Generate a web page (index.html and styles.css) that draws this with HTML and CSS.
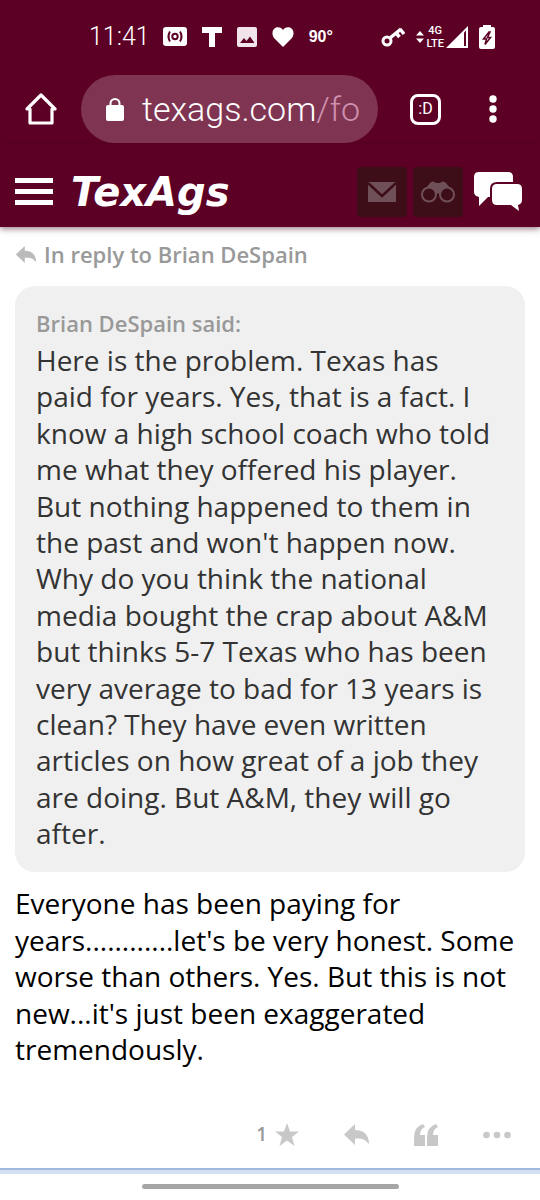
FILE: index.html
```
<!DOCTYPE html>
<html lang="en">
<head>
    <meta charset="UTF-8">
    <meta name="viewport" content="width=device-width, initial-scale=1.0">
    <title>TexAgs</title>
    <link rel="stylesheet" href="styles.css">
</head>
<body>
    <div class="status-bar">
        <span class="clock">11:41</span>
        <div class="notifications">
            <svg width="24" height="20" viewBox="0 0 24 20">
                <rect width="24" height="19" rx="3" fill="#fff"/>
                <g fill="none" stroke="#5c0025" stroke-width="2">
                    <circle cx="12" cy="9.500" r="2.700"/>
                    <path d="M7 4.500Q4 9.500 7 14.500M17 4.500Q20 9.500 17 14.500"/>
                </g>
            </svg>
            <svg width="20" height="20" viewBox="0 0 20 20" fill="#fff"><path d="M0 0H20V6H13V20H7V6H0Z"/></svg>
            <svg width="20" height="20" viewBox="0 0 20 20">
                <rect width="20" height="20" rx="2" fill="#f1e4ea"/>
                <path d="M3 16L7 11L9.500 14L13 9.500L17.500 16Z" fill="#5c0025"/>
            </svg>
            <svg width="22" height="20" viewBox="0 0 22 20" fill="#fff"><path d="M11 20L3 12C-1 8 0 2 4 .500C7-.500 10 1 11 3C12 1 15-.500 18 .500C22 2 23 8 19 12Z"/></svg>
            <span class="temp">90°</span>
        </div>
        <div class="signals">
            <svg width="24" height="22" viewBox="0 0 24 22">
                <circle cx="6" cy="15" r="4" fill="none" stroke="#fff" stroke-width="3"/>
                <path d="M9 12L20 3M15 7L18.500 11M19 3L23 8" fill="none" stroke="#fff" stroke-width="3.500"/>
            </svg>
            <div class="network">
                <svg width="8" height="12" viewBox="0 0 8 12" fill="#fff"><path d="M4 0L8 4.500H0ZM4 12L0 7.500H8Z"/></svg>
                <div class="lte">
                    <div>4G</div>
                    <div>LTE</div>
                </div>
                <svg width="22" height="22" viewBox="0 0 22 22"><path d="M0 22L22 0V22Z" fill="#fff"/><path d="M18 6.500V20H20V4.500Z" fill="#5c0025"/></svg>
            </div>
            <svg width="16" height="24" viewBox="0 0 16 24">
                <path d="M4 0H12V2H14Q16 2 16 4V22Q16 24 14 24H2Q0 24 0 22V4Q0 2 2 2H4Z" fill="#fff"/>
                <path d="M10 7L4.500 14H7.500L6 19.500L11.500 12.500H8.500L11 7Z" fill="none" stroke="#5c0025" stroke-width="1.500"/>
            </svg>
        </div>
    </div>

    <div class="browser-bar">
        <button class="icon-button" aria-label="Home">
            <svg width="32" height="32" viewBox="0 0 32 32" fill="none" stroke="#fff" stroke-width="3.200" stroke-linejoin="round"><path d="M2 16L16 2L30 16H27V30H5V16Z"/></svg>
        </button>
        <button class="address">
            <svg width="18" height="23" viewBox="0 0 18 23"><path d="M4.500 9V5.500A4.500 4.500 0 0 1 13.500 5.500V9" fill="none" stroke="#fff" stroke-width="2"/><rect y="7" width="18" height="16" rx="2" fill="#fff"/></svg>
            <span class="url">texags.com<span class="path">/fo</span></span>
        </button>
        <button class="tabs" aria-label="Tabs">:D</button>
        <button class="icon-button" aria-label="More">
            <svg width="8" height="28" viewBox="0 0 8 28" fill="#fff"><circle cx="4" cy="4" r="3.700"/><circle cx="4" cy="14" r="3.700"/><circle cx="4" cy="24" r="3.700"/></svg>
        </button>
    </div>

    <header class="site-header">
        <button class="icon-button" aria-label="Menu">
            <svg width="38" height="28" viewBox="0 0 38 28" fill="#fff"><path d="M0 0H38V5H0ZM0 11H38V16H0ZM0 22H38V27H0Z"/></svg>
        </button>
        <a class="logo" href="#">TexAgs</a>
        <button class="tile" aria-label="Messages">
            <svg width="28" height="20" viewBox="0 0 28 20"><path d="M0 0H28V20H0Z" fill="#705058"/><path d="M0 1L14 14L28 1" fill="none" stroke="#3d0d18" stroke-width="2.500"/></svg>
        </button>
        <button class="tile" aria-label="Watched topics">
            <svg width="34" height="22" viewBox="0 0 34 22">
                <path d="M1 12L9 2Q12-1 15 2H19Q22-1 25 2L33 12L25 18L17 12L9 18Z" fill="#705058"/>
                <g fill="#3d0d18" stroke="#705058" stroke-width="2"><circle cx="8" cy="13.500" r="7"/><circle cx="26" cy="13.500" r="7"/></g>
            </svg>
        </button>
        <button class="icon-button" aria-label="Forums">
            <svg width="48" height="39" viewBox="0 0 48 39" fill="#fff">
                <path d="M5 0H34Q39 0 39 5V10H23Q16 10 16 17V25H14L5 34V25Q0 24 0 20V5Q0 0 5 0Z"/>
                <path d="M23 12H43Q48 12 48 17V28Q48 32 44 33L45 39L37 33H23Q18 33 18 28V17Q18 12 23 12Z"/>
            </svg>
        </button>
    </header>

    <main class="post">
        <a class="reply-to" href="#">
            <svg width="22" height="17" viewBox="0 0 25 21" fill="#bbb"><path d="M0 10.500L11 0V6C20 6 25 11 25 20C21 15 18 14 11 14.500V21Z"/></svg>
            In reply to Brian DeSpain
        </a>
        <blockquote class="quote">
            <cite class="quote-author">Brian DeSpain said:</cite>
            <p>Here is the problem. Texas has paid for years. Yes, that is a fact. I know a high school coach who told me what they offered his player. But nothing happened to them in the past and won't happen now. Why do you think the national media bought the crap about A&amp;M but thinks 5-7 Texas who has been very average to bad for 13 years is clean? They have even written articles on how great of a job they are doing. But A&amp;M, they will go after.</p>
        </blockquote>
        <p class="message">Everyone has been paying for years............let's be very honest. Some worse than others. Yes. But this is not new...it's just been exaggerated tremendously.</p>
        <div class="actions">
            <button class="star" aria-label="1 star">
                1
                <svg width="24" height="23" viewBox="0 0 24 23" fill="#c8c8c8"><path d="M12 0L15 8.500H24L17 14L19.500 23L12 17.500L4.500 23L7 14L0 8.500H9Z"/></svg>
            </button>
            <button aria-label="Reply">
                <svg width="25" height="21" viewBox="0 0 25 21" fill="#c8c8c8"><path d="M0 10.500L11 0V6C20 6 25 11 25 20C21 15 18 14 11 14.500V21Z"/></svg>
            </button>
            <button aria-label="Quote">
                <svg width="24" height="22" viewBox="0 0 24 22" fill="#c8c8c8"><path d="M9 0L11 3Q6 5 6 11H11V22H0V13Q0 3 9 0ZM22 0L24 3Q19 5 19 11H24V22H13V13Q13 3 22 0Z"/></svg>
            </button>
            <button aria-label="More options">
                <svg width="28" height="8" viewBox="0 0 28 8" fill="#c8c8c8"><circle cx="3.500" cy="4" r="3.300"/><circle cx="14" cy="4" r="3.300"/><circle cx="24.500" cy="4" r="3.300"/></svg>
            </button>
        </div>
    </main>
    <div class="divider"></div>
    <div class="nav-handle"></div>
</body>
</html>
```
FILE: styles.css
```
* {
    box-sizing: border-box;
}
body {
    margin: 0;
    background: #fff;
    font-family: "Open Sans", sans-serif;
    font-size: 28px;
    line-height: 1.3;
    color: #111;
}
svg {
    display: block;
    flex-shrink: 0;
}
button {
    border: 0;
    padding: 0;
    background: none;
    font: inherit;
    color: inherit;
    cursor: pointer;
}
p {
    margin: 0;
}
.status-bar, .browser-bar, .site-header {
    display: flex;
    align-items: center;
    background: #5c0025;
    color: #fff;
}
.status-bar {
    height: 74px;
    padding: 0 45px 0 89px;
    font-family: Roboto, sans-serif;
}
.clock {
    font-size: 25px;
    font-weight: 300;
}
.notifications {
    display: flex;
    align-items: center;
    gap: 15px;
    margin-left: 13px;
}
.temp {
    font-family: "Liberation Sans", sans-serif;
    font-size: 16px;
    font-weight: bold;
}
.signals {
    display: flex;
    align-items: center;
    gap: 11px;
    margin-left: auto;
}
.network {
    display: flex;
    align-items: center;
    gap: 2px;
}
.lte {
    font-size: 11px;
    font-weight: 500;
    line-height: 13px;
    text-align: center;
}
.browser-bar {
    height: 70px;
    padding: 0 43px 0 25px;
}
.address {
    display: flex;
    align-items: center;
    flex: 1;
    gap: 18px;
    height: 68px;
    margin: 0 32px 0 24px;
    padding-left: 25px;
    border-radius: 34px;
    background: #7f3552;
    font-family: Roboto, sans-serif;
    font-size: 34px;
    font-weight: 300;
}
.path {
    color: #cf8fae;
}
.tabs {
    width: 31px;
    height: 31px;
    margin-right: 48px;
    border: 3px solid #fff;
    border-radius: 8px;
    font-family: Roboto, sans-serif;
    font-size: 16px;
    line-height: 24px;
}
.site-header {
    height: 83px;
    padding: 12px 18px 0 15px;
    box-shadow: 0 2px 6px rgba(60, 0, 30, 0.5);
}
.logo {
    margin: 0 auto 0 18px;
    font-family: "DejaVu Sans", sans-serif;
    font-size: 40px;
    font-style: italic;
    font-weight: bold;
    line-height: 40px;
    color: #fff;
    text-decoration: none;
}
.tile {
    display: flex;
    align-items: center;
    justify-content: center;
    width: 50px;
    height: 50px;
    margin-right: 6px;
    border-radius: 4px;
    background: #3d0d18;
}
.tile + .icon-button {
    margin-left: 5px;
}
.post {
    padding: 12px 15px 21px;
}
.reply-to {
    display: flex;
    align-items: center;
    gap: 7px;
    font-size: 22px;
    font-weight: 600;
    line-height: 30px;
    color: #999;
    text-decoration: none;
}
.quote {
    margin: 17px 0 13px;
    padding: 21px 27px 21px 21px;
    border-radius: 20px;
    background: #f0f0f0;
    color: #333;
}
.quote-author {
    display: block;
    margin-bottom: 3px;
    font-size: 22px;
    font-style: normal;
    font-weight: 600;
    line-height: 32px;
    color: #999;
}
.message {
    color: #000;
}
.actions {
    display: flex;
    align-items: center;
    justify-content: flex-end;
    gap: 45px;
    margin-top: 55px;
    padding-right: 14px;
}
.star {
    display: flex;
    align-items: center;
    gap: 8px;
    font-size: 19px;
    font-weight: 600;
    color: #999;
}
.divider {
    height: 6px;
    border-top: 2px solid #a3b8de;
    background: #d3dff2;
}
.nav-handle {
    width: 257px;
    height: 5px;
    margin: 10px auto;
    border-radius: 3px;
    background: #a6a6a6;
}
```
